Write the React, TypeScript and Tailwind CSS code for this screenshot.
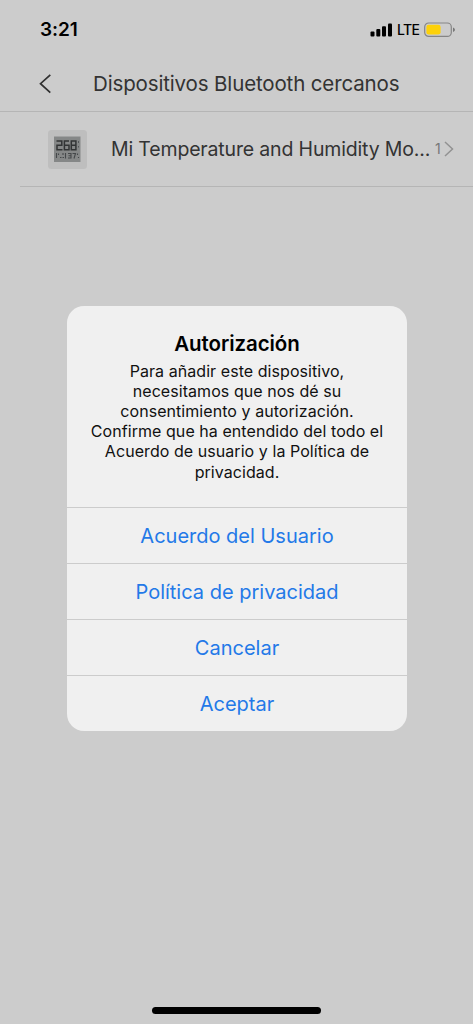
const actions = ['Acuerdo del Usuario', 'Política de privacidad', 'Cancelar', 'Aceptar'];

const messageLines = [
  'Para añadir este dispositivo,',
  'necesitamos que nos dé su',
  'consentimiento y autorización.',
  'Confirme que ha entendido del todo el',
  'Acuerdo de usuario y la Política de',
  'privacidad.',
];

function StatusBar() {
  return (
    <div className="flex h-[57px] items-center justify-between pl-10 pr-[17px] pt-[2px] text-black">
      <span className="text-[19px] font-semibold leading-6 tracking-[-0.100px]">3:21</span>
      <div className="flex items-center">
        <svg width="23" height="14" viewBox="0 0 23 14" fill="#000">
          <rect x="0.5" y="8.5" width="4" height="5" rx="1" />
          <rect x="6.3" y="6" width="4" height="7.5" rx="1" />
          <rect x="12" y="3.3" width="4" height="10.2" rx="1" />
          <rect x="18" y="0.5" width="4" height="13" rx="1" />
        </svg>
        <span className="ml-[4px] w-[22px] whitespace-nowrap text-[14px] font-medium leading-5 tracking-[-0.600px]">LTE</span>
        <svg className="ml-[5px]" width="32" height="16" viewBox="0 0 32 16">
          <rect x="0.7" y="1" width="26.6" height="13.4" rx="4" fill="none" stroke="#858585" strokeWidth="1.2" />
          <rect x="2.4" y="2.8" width="14.2" height="9.8" rx="2.3" fill="#fdd109" />
          <path d="M29 5.4c1.3.5 1.9 1.300 1.900 2.300s-.6 1.800-1.900 2.300z" fill="#777" />
        </svg>
      </div>
    </div>
  );
}

function Sensor() {
  return (
    <svg width="39" height="39" viewBox="0 0 39 39">
      <rect width="39" height="39" rx="3.5" fill="#bebebe" />
      <rect x="6" y="6.500" width="26.500" height="25.500" fill="#858787" />
      <g fill="none" stroke="#323435" strokeWidth="1.500">
        <path d="M8.500 11h5.300v4.200H9v4.600h5.500" />
        <path d="M21 11h-4.600v8.800H21v-4.600h-4.600" />
        <path d="M23.300 11h4.600v8.800h-4.600zM23.300 15.200h4.600" />
      </g>
      <path d="M30.500 11v2M30.500 16v1.500" stroke="#55585a" />
      <g fill="none" stroke="#45484a" strokeWidth="1.100">
        <path d="M8.500 23v5M10.500 23.500v1.500M12 27.500h1.500M15 23v2M14.500 27.500h1.500M17.500 23v5.500" />
        <path d="M20 23.500h3v4.500h-3M20.500 25.700h2.500M24.500 23.500h3l-1.500 5M29.500 23.500v1.500M30.500 27v1" />
      </g>
    </svg>
  );
}

export default function App() {
  return (
    <div className="relative flex h-[1024px] w-[473px] flex-col overflow-hidden bg-[#cccccc] font-['Inter',sans-serif]">
      <StatusBar />

      <header className="flex h-[55px] items-center border-b border-[#b5b5b5] pl-[39px]">
        <svg width="13" height="20" viewBox="0 0 13 20" fill="none" stroke="#303030" strokeWidth="1.700">
          <path d="M11.300 0.800L1.500 9.700l9.800 9" />
        </svg>
        <h1 className="ml-[41px] whitespace-nowrap text-[20.500px] leading-7 tracking-[-0.140px] text-[#333333]">Dispositivos Bluetooth cercanos</h1>
      </header>

      <div className="ml-5 flex h-[75px] items-center border-b border-[#b5b5b5] pl-7">
        <Sensor />
        <span className="ml-6 w-[320px] whitespace-nowrap text-[19.500px] leading-7 tracking-[-0.160px] text-[#333333]">
          Mi Temperature and Humidity Mo...
        </span>
        <span className="ml-1 text-[14px] leading-5 text-[#777777]">1</span>
        <svg className="ml-[3px]" width="10" height="16" viewBox="0 0 10 16" fill="none" stroke="#929292" strokeWidth="1.500">
          <path d="M1 1l7.500 7L1 15" />
        </svg>
      </div>

      <div className="absolute left-[67px] top-[306px] w-[340px] overflow-hidden rounded-[17px] bg-[#f0f0f0]" role="dialog">
        <div className="h-[201px] pt-[24px] text-center text-black">
          <h2 className="text-[20.500px] font-semibold leading-[28px] tracking-[-0.080px]">Autorización</h2>
          <div className="pt-[2.500px] text-[16px] leading-[20.200px] tracking-[0.060px] text-[#111111]">
            {messageLines.map((line) => (
              <p key={line} className="whitespace-nowrap">{line}</p>
            ))}
          </div>
        </div>
        {actions.map((label) => (
          <button key={label} className="flex h-14 w-full items-center justify-center border-t border-[#cccccc] text-[20px] text-[#2379e8]">
            {label}
          </button>
        ))}
      </div>

      <div className="mb-[10px] ml-[152px] mt-auto h-[7px] w-[169px] rounded-full bg-black" />
    </div>
  );
}
